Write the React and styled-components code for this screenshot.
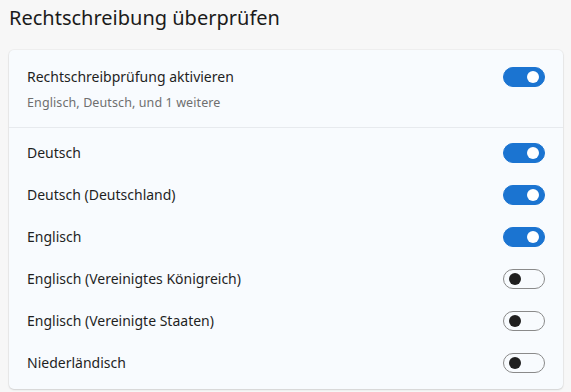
import React, { useState } from "react";
import styled, { createGlobalStyle } from "styled-components";

const Global = createGlobalStyle`
  html, body { margin: 0; padding: 0; background: #f7f7f7; }
  body { font-family: "Noto Sans", "Open Sans", sans-serif; color: #1b1b1b; }
  * { box-sizing: border-box; }
`;

const Page = styled.div`
  width: 571px;
  height: 392px;
  padding: 3px 8px 0 9px;
  background: #f7f7f7;
  display: flex;
  flex-direction: column;
`;

const Title = styled.h1`
  margin: 0;
  font-size: 20px;
  line-height: 30px;
  font-weight: 400;
  color: #1b1b1b;
  letter-spacing: 0;
`;

const Card = styled.section`
  margin-top: 17px;
  width: 554px;
  background: #f8fbfe;
  border-radius: 5px;
  box-shadow: 0 0 0 1px rgba(0, 0, 0, 0.03), 0 1px 2px rgba(0, 0, 0, 0.12);
  display: flex;
  flex-direction: column;
`;

const Header = styled.div`
  padding: 17px 18px 16px 18px;
  border-bottom: 1px solid #e7eaee;
  display: grid;
  grid-template-columns: 1fr auto;
  row-gap: 8px;
  align-items: center;
`;

const List = styled.div`
  padding: 4px 0 5px;
  display: flex;
  flex-direction: column;
`;

const Row = styled.div`
  height: 42px;
  padding: 0 18px;
  display: flex;
  align-items: center;
  justify-content: space-between;
`;

const Label = styled.span`
  font-size: 14px;
  line-height: 20px;
  color: #1f1f1f;
  letter-spacing: 0;
`;

const Sub = styled.span`
  grid-column: 1 / -1;
  font-size: 12.5px;
  line-height: 16px;
  color: #6f6f6f;
  letter-spacing: 0.1px;
`;

const Track = styled.button`
  width: 42px;
  height: 20px;
  border-radius: 10px;
  cursor: pointer;
  display: flex;
  align-items: center;
  border: 1px solid ${(p) => (p.$on ? "#1b74d1" : "#8a8a8a")};
  background: ${(p) => (p.$on ? "#1b74d1" : "transparent")};
  justify-content: ${(p) => (p.$on ? "flex-end" : "flex-start")};
  padding: 0 5px;
`;

const Knob = styled.span`
  width: 12px;
  height: 12px;
  border-radius: 50%;
  background: ${(p) => (p.$on ? "#ffffff" : "#1f1f1f")};
`;

function Toggle({ on, onClick }) {
  return (
    <Track $on={on} onClick={onClick} aria-pressed={on}>
      <Knob $on={on} />
    </Track>
  );
}

const initial = [
  { name: "Deutsch", on: true },
  { name: "Deutsch (Deutschland)", on: true },
  { name: "Englisch", on: true },
  { name: "Englisch (Vereinigtes Königreich)", on: false },
  { name: "Englisch (Vereinigte Staaten)", on: false },
  { name: "Niederländisch", on: false },
];

export default function App() {
  const [master, setMaster] = useState(true);
  const [langs, setLangs] = useState(initial);
  return (
    <Page>
      <Global />
      <Title>Rechtschreibung überprüfen</Title>
      <Card>
        <Header>
          <Label>Rechtschreibprüfung aktivieren</Label>
          <Toggle on={master} onClick={() => setMaster(!master)} />
          <Sub>Englisch, Deutsch, und 1 weitere</Sub>
        </Header>
        <List>
          {langs.map((l, i) => (
            <Row key={l.name}>
              <Label>{l.name}</Label>
              <Toggle
                on={l.on}
                onClick={() =>
                  setLangs(langs.map((x, j) => (j === i ? { ...x, on: !x.on } : x)))
                }
              />
            </Row>
          ))}
        </List>
      </Card>
    </Page>
  );
}
